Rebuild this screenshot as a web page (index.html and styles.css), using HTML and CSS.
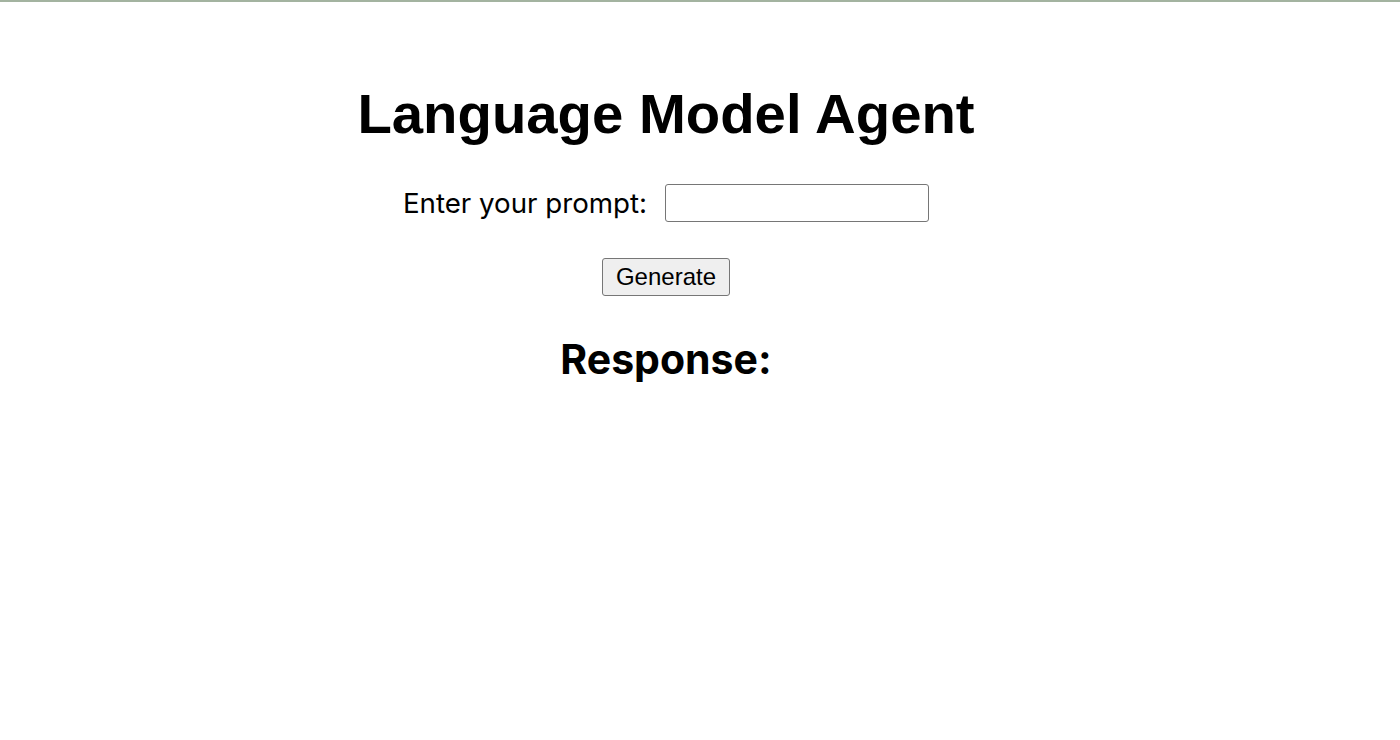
FILE: index.html
```html
<!DOCTYPE html>
<html lang="en">
<head>
<meta charset="utf-8">
<title>Language Model Agent</title>
<link rel="stylesheet" href="styles.css">
</head>
<body>
<main class="app">
  <h1 class="title">Language Model Agent</h1>
  <form class="prompt-form">
    <div class="prompt-row">
      <label class="prompt-label" for="prompt">Enter your prompt:</label>
      <input class="prompt-input" id="prompt" type="text">
    </div>
    <button class="generate-btn" type="button">Generate</button>
  </form>
  <h2 class="response-title">Response:</h2>
  <div class="response"></div>
</main>
</body>
</html>
```

FILE: styles.css
```css
html, body {
  margin: 0;
  padding: 0;
  background: #ffffff;
}

body {
  border-top: 2px solid #a3b3a0;
  color: #000;
}

.app {
  width: 1332px;
  display: flex;
  flex-direction: column;
  align-items: center;
}

.title {
  margin: 78px 0 0;
  font-family: "Liberation Sans", Arial, sans-serif;
  font-weight: 700;
  font-size: 56.3px;
  line-height: 68px;
}

.prompt-form {
  display: flex;
  flex-direction: column;
  align-items: center;
  margin-top: 36px;
}

.prompt-row {
  display: flex;
  align-items: center;
  gap: 18px;
}

.prompt-label {
  font-family: Inter, "Noto Sans", sans-serif;
  font-size: 27.7px;
}

.prompt-input {
  box-sizing: border-box;
  width: 264px;
  height: 38px;
  margin: 0;
  border: 1px solid #767676;
  border-radius: 3px;
  background: #fff;
  font-size: 16px;
}

.generate-btn {
  box-sizing: border-box;
  margin-top: 36px;
  height: 38px;
  padding: 0 13px;
  border: 1px solid #767676;
  border-radius: 3px;
  background: #efefef;
  color: #000;
  font-family: "Liberation Sans", Arial, sans-serif;
  font-size: 24px;
}

.response-title {
  margin: 38px 0 0;
  font-family: Inter, "Noto Sans", sans-serif;
  font-weight: 700;
  font-size: 41px;
}
```
